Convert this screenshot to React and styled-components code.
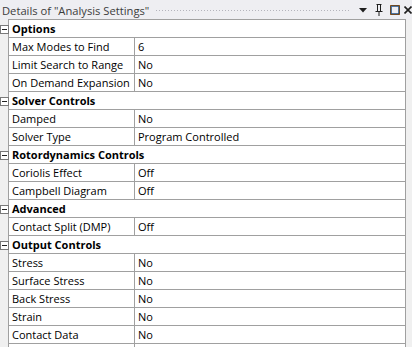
import React from "react";
import styled, { createGlobalStyle } from "styled-components";

const GlobalStyle = createGlobalStyle`
  html, body {
    margin: 0;
    padding: 0;
    background: #f0f0f0;
  }
  body {
    font-family: "Open Sans", "Noto Sans", "Liberation Sans", sans-serif;
    font-size: 11px;
    color: #000;
  }
`;

const Panel = styled.div`
  width: 412px;
  height: 347px;
  overflow: hidden;
  background: #f0f0f0;
  display: flex;
  flex-direction: column;
`;

const TitleBar = styled.div`
  height: 20px;
  flex: none;
  display: flex;
  align-items: center;
  padding-left: 2px;
  background: #eeeef2;
  color: #3c3c3c;
  font-size: 11.2px;
  white-space: nowrap;
`;

const Grip = styled.div`
  flex: 1;
  height: 4px;
  margin: 1px 4px 0 6px;
  background-image: radial-gradient(circle, #b4b4bc 0.5px, transparent 0.8px);
  background-size: 3px 3px;
`;

const TitleButton = styled.div`
  width: ${(p) => p.$w || 12}px;
  margin-right: ${(p) => p.$mr || 0}px;
  height: 20px;
  display: flex;
  align-items: center;
  justify-content: center;
  flex: none;
`;

const Body = styled.div`
  flex: 1;
  display: flex;
`;

const Gutter = styled.div`
  width: 8px;
  flex: none;
`;

const Table = styled.div`
  width: 396px;
  flex: none;
  background: #fff;
  border-left: 1px solid #a0a0a0;
  border-right: 1px solid #a0a0a0;
  border-top: 1px solid #a0a0a0;
  margin-top: -1px;
`;

const Row = styled.div`
  display: grid;
  grid-template-columns: 125px 1fr;
  height: 17px;
  border-bottom: 1px solid #a0a0a0;
  position: relative;
`;

const Cell = styled.div`
  padding-left: 3px;
  line-height: 17px;
  white-space: nowrap;
  overflow: hidden;
  & + & {
    border-left: 1px solid #a0a0a0;
  }
`;

const Heading = styled.div`
  grid-column: 1 / 3;
  padding-left: 3px;
  line-height: 17px;
  font-weight: 700;
  white-space: nowrap;
`;

const Expander = styled.div`
  position: absolute;
  left: -9px;
  top: 5px;
  width: 7px;
  height: 7px;
  border: 1px solid #7a7a7a;
  background: #fff;
  &::after {
    content: "";
    position: absolute;
    left: 1px;
    top: 3px;
    width: 5px;
    height: 1px;
    background: #222;
  }
`;

const ScrollStrip = styled.div`
  flex: 1;
  background: #f0f0f0;
`;

const groups = [
  {
    title: "Options",
    rows: [
      ["Max Modes to Find", "6"],
      ["Limit Search to Range", "No"],
      ["On Demand Expansion", "No"],
    ],
  },
  {
    title: "Solver Controls",
    rows: [
      ["Damped", "No"],
      ["Solver Type", "Program Controlled"],
    ],
  },
  {
    title: "Rotordynamics Controls",
    rows: [
      ["Coriolis Effect", "Off"],
      ["Campbell Diagram", "Off"],
    ],
  },
  {
    title: "Advanced",
    rows: [["Contact Split (DMP)", "Off"]],
  },
  {
    title: "Output Controls",
    rows: [
      ["Stress", "No"],
      ["Surface Stress", "No"],
      ["Back Stress", "No"],
      ["Strain", "No"],
      ["Contact Data", "No"],
      ["", ""],
    ],
  },
];

const DropIcon = () => (
  <svg width="8" height="5" viewBox="0 0 8 5">
    <path d="M0 0H8L4 4.5Z" fill="#1e1e1e" />
  </svg>
);

const PinIcon = () => (
  <svg width="8" height="12" viewBox="0 0 8 12">
    <path d="M1.5 0.5H6.5M2.5 0.5V7M5.5 0.5V7M0.5 7.5H7.5M4 7.5V12" stroke="#1e1e1e" strokeWidth="1" fill="none" />
  </svg>
);

const MaxIcon = () => (
  <svg width="10" height="10" viewBox="0 0 10 10">
    <rect x="0.5" y="0.5" width="9" height="9" fill="none" stroke="#e08a30" strokeWidth="1" />
    <rect x="1" y="1" width="8" height="8" fill="none" stroke="#1e1e1e" strokeWidth="1.2" />
    <rect x="1.5" y="1.5" width="7" height="7" fill="none" stroke="#3a78c0" strokeWidth="0.6" />
  </svg>
);

const CloseIcon = () => (
  <svg width="8" height="8" viewBox="0 0 8 8">
    <path d="M0.5 0.5L7.5 7.5M7.5 0.5L0.5 7.5" stroke="#1e1e1e" strokeWidth="1.6" />
  </svg>
);

export default function App() {
  return (
    <>
      <GlobalStyle />
      <Panel>
        <TitleBar>
          Details of "Analysis Settings"
          <Grip />
          <TitleButton $w={16}>
            <DropIcon />
          </TitleButton>
          <TitleButton $w={16}>
            <PinIcon />
          </TitleButton>
          <TitleButton $w={15}>
            <MaxIcon />
          </TitleButton>
          <TitleButton $w={12} $mr={-2}>
            <CloseIcon />
          </TitleButton>
        </TitleBar>
        <Body>
          <Gutter />
          <Table>
            {groups.map((g) => (
              <React.Fragment key={g.title}>
                <Row>
                  <Expander />
                  <Heading>{g.title}</Heading>
                </Row>
                {g.rows.map(([name, value], i) => (
                  <Row key={g.title + i}>
                    <Cell>{name}</Cell>
                    <Cell>{value}</Cell>
                  </Row>
                ))}
              </React.Fragment>
            ))}
          </Table>
          <ScrollStrip />
        </Body>
      </Panel>
    </>
  );
}
